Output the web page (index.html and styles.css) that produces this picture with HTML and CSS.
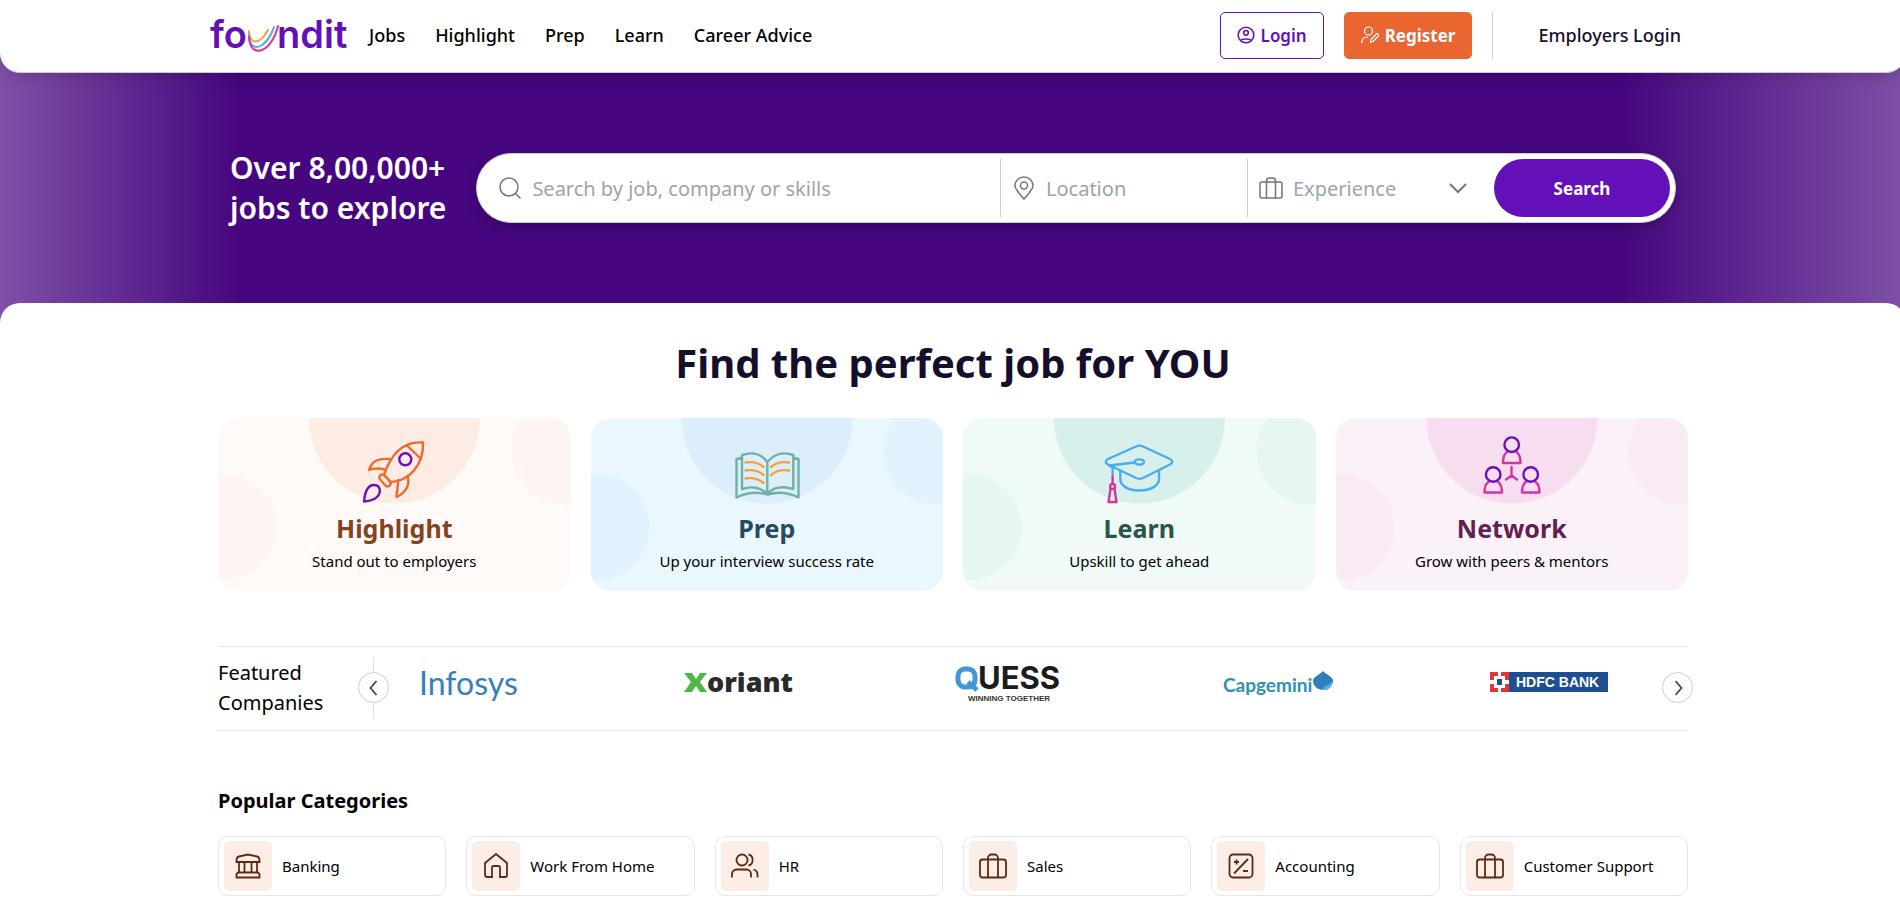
FILE: index.html
```html
<!DOCTYPE html>
<html lang="en">
<head>
  <meta charset="UTF-8" />
  <meta name="viewport" content="width=device-width, initial-scale=1.0"/>
  <title>foundit - Find the perfect job for you</title>
  <link rel="stylesheet" href="styles.css">
</head>
<body>
<div class="page">
  <header class="header">
    <div class="header-inner">
      <a href="#" class="logo" aria-label="foundit">
        <svg width="138" height="50" viewBox="0 0 138 50">
          <text class="logo-text" x="-1" y="38">fo</text>
          <text class="logo-text" x="66" y="38">ndit</text>
          <g fill="none" stroke-width="2" stroke-linecap="round">
            <path d="M38 21c0 14 11 14 19-1" stroke="#f5a53a"/>
            <path d="M38 24c0 20 17 16 25-7" stroke="#4db1f5"/>
            <path d="M38 27c1 22 22 17 29-11" stroke="#d9359a"/>
          </g>
        </svg>
      </a>
      <nav class="nav">
        <a href="#">Jobs</a>
        <a href="#">Highlight</a>
        <a href="#">Prep</a>
        <a href="#">Learn</a>
        <a href="#">Career Advice</a>
      </nav>
      <div class="header-actions">
        <button class="btn btn-login">
          <svg width="18" height="18" viewBox="0 0 18 18" fill="none" stroke="currentColor" stroke-width="1.6"><circle cx="9" cy="9" r="7.8"/><circle cx="9" cy="6.8" r="2.3"/><path d="M3.7 14.6c1-2.2 9.600-2.200 10.600 0"/></svg>
          Login
        </button>
        <button class="btn btn-register">
          <svg width="18" height="18" viewBox="0 0 18 18" fill="none" stroke="currentColor" stroke-width="1.2" stroke-linecap="round" stroke-linejoin="round"><circle cx="7.500" cy="5" r="4"/><path d="M.8 16.500c0-3.500 2-5.500 5.700-5.500M9.500 16.500l.5-3 5.500-5.500c1.500-1 3 .5 2 2L12 15.500z"/></svg>
          Register
        </button>
        <a href="#" class="employers">Employers Login</a>
      </div>
    </div>
  </header>

  <section class="hero">
    <div class="hero-inner">
      <p class="hero-text">Over 8,00,000+<br>jobs to explore</p>
      <form class="search">
        <label class="field field-job">
          <svg width="24" height="24" viewBox="0 0 24 24" class="field-icon"><circle cx="11" cy="11" r="9"/><path d="M17.500 17.500l5 5"/></svg>
          <input type="text" placeholder="Search by job, company or skills" aria-label="Search by job, company or skills">
        </label>
        <label class="field field-place">
          <svg width="24" height="24" viewBox="0 0 24 24" class="field-icon"><path d="M12 23C7 17 3 13.500 3 9.500a9 8.500 0 0 1 18 0c0 4-4 7.500-9 13.500z"/><circle cx="12" cy="9.500" r="3.500"/></svg>
          <input type="text" placeholder="Location" aria-label="Location">
        </label>
        <label class="field field-exp">
          <svg width="24" height="24" viewBox="0 0 24 24" class="field-icon"><rect x="1" y="6" width="22" height="16" rx="2"/><path d="M7.500 22V5a3 3 0 0 1 3-3h3a3 3 0 0 1 3 3v17"/></svg>
          <select aria-label="Experience"><option>Experience</option></select>
          <svg width="20" height="20" viewBox="0 0 20 20" class="field-icon field-chevron"><path d="M2 6l8 8 8-8"/></svg>
        </label>
        <button type="button" class="search-btn">Search</button>
      </form>
    </div>
  </section>

  <main class="main">
    <div class="container">
      <h1 class="title">Find the perfect job for YOU</h1>

      <div class="cards">
        <a href="#" class="card card-highlight">
          <svg width="70" height="86" viewBox="0 0 70 86" class="card-icon">
            <g stroke="#ee6a2c">
              <path d="M64 24.500C46 23 33 33 25 57l7 7c17-1 33-16 32-39.500z"/>
              <path d="M48 27.500l14 13.500M30.500 41C19 40 13 43 10 52c5-2 10-2 15.500-.5M48.500 58c3 9-2 17-11 21 0-6 2-10 1.500-17"/>
              <rect x="-3" y="-7" width="6" height="14" rx="3" transform="translate(26 62.500) rotate(-42)"/>
            </g>
            <g stroke="#6a10bc"><circle cx="46.300" cy="41.300" r="6"/><path d="M5 83.500C6 73 9 67 15 67c6 0 8 7 3 12-3 3-8 4-13 4.500z"/></g>
          </svg>
          <h2>Highlight</h2>
          <p>Stand out to employers</p>
        </a>
        <a href="#" class="card card-prep">
          <svg width="70" height="86" viewBox="0 0 70 86" class="card-icon">
            <path stroke="#6fb1a2" d="M35.300 76V44c-6-8-15-10.500-25.300-7v34c9-3 19-2 25.300 5 6-7 16-8 26-5V37c-10-3.500-19-1-26 7M10 40l-5.500 1v38.500c10-5 21-6 31-3 10-3 21-2 31 3V41L61.300 40"/>
            <path stroke="#f5a431" d="M13.500 44.500c7-1 13 0 18 4.500M13.500 52.500c7-1 13 0 18 4.500M13.500 60.500c7-1 13 0 18 4.500M39 49c5-4.500 11-5.500 18-4.500M39 57c5-4.500 11-5.500 18-4.500"/>
          </svg>
          <h2>Prep</h2>
          <p>Up your interview success rate</p>
        </a>
        <a href="#" class="card card-learn">
          <svg width="70" height="86" viewBox="0 0 70 86" class="card-icon">
            <g stroke="#4aabf7"><path d="M32 28.500L4 41c-3 1.500-3 4 0 5.500l28 13.500c2.500 1 4.500 1 7 0l27-13.500c3-1.500 3-4 0-5.500L39 28.500c-2.500-1.200-4.500-1.200-7 0z"/><path d="M16.300 52.500V61c0 7 8 11.500 19 11.500S55 68 55 61v-8.500M31 44.500L5 47.500l3.600 2V56"/><ellipse cx="35.400" cy="44" rx="4.600" ry="2.600"/></g>
            <g stroke="#d6359e"><path d="M8.600 58v8M6.500 71L4.500 84h8L10.500 71"/><circle cx="8.600" cy="68.500" r="2.500"/></g>
          </svg>
          <h2>Learn</h2>
          <p>Upskill to get ahead</p>
        </a>
        <a href="#" class="card card-network">
          <svg width="70" height="86" viewBox="0 0 70 86" class="card-icon">
            <path stroke="#d6359e" d="M30 34c-3 2-4 5-4 11h17.500c0-6-1-9-4-11M11.500 64c-3 2-4 5-4 10.500H25c0-5.500-1-8.500-4-10.500M49 64c-3 2-4 5-4 10.500h17.500c0-5.500-1-8.500-4-10.500M34.500 49v8.500L29 61.500M34.500 57.500l5.500 4"/>
            <g stroke="#6a10bc"><circle cx="34.700" cy="26.700" r="7.300"/><circle cx="16.200" cy="56.500" r="7.300"/><circle cx="53.700" cy="56.500" r="7.300"/></g>
          </svg>
          <h2>Network</h2>
          <p>Grow with peers &amp; mentors</p>
        </a>
      </div>

      <section class="featured">
        <h3 class="featured-title">Featured Companies</h3>
        <div class="prev">
          <button class="arrow" aria-label="Previous"><svg width="20" height="20" viewBox="0 0 20 20"><path d="M12.500 3L6.500 10l6 7"/></svg></button>
        </div>
        <div class="companies">
          <a href="#" class="company" aria-label="Infosys">
            <svg width="110" height="50" viewBox="0 0 110 50"><text class="infosys" x="5" y="37">Infosys</text></svg>
          </a>
          <a href="#" class="company" aria-label="Xoriant">
            <svg width="112" height="50" viewBox="0 0 112 50"><path d="M3 15h8l4 6 4-6h7l-7 9 7 10h-7l-4-6-4 6H3l7-10z" fill="#4db848"/><text class="xoriant" x="26" y="34">oriant</text></svg>
          </a>
          <a href="#" class="company" aria-label="Quess">
            <svg width="112" height="50" viewBox="0 0 112 50">
              <g fill="none" stroke-width="5"><rect x="9" y="11" width="17" height="18" rx="7" stroke="#3d97d8"/><path d="M19 24l9 8" stroke="#3d97d8"/></g>
              <text class="quess" x="29" y="31">UESS</text>
              <text class="quess-sub" x="19" y="43">WINNING TOGETHER</text>
            </svg>
          </a>
          <a href="#" class="company" aria-label="Capgemini">
            <svg width="116" height="50" viewBox="0 0 116 50"><text class="capgemini" x="5" y="34">Capgemini</text><path d="M105 13c3 4 10 5 10 10 0 5-5 9-10 9s-10-4-10-9 7-6 10-10z" fill="#2f80bd"/><path d="M114 23c-2 5-7 3-10 9 6 1 11-3 10-9z" fill="#4bb8e6"/></svg>
          </a>
          <a href="#" class="company" aria-label="HDFC Bank">
            <svg width="118" height="50" viewBox="0 0 118 50">
              <path fill="#1d4f91" d="M0 14h118v20H0z"/><path fill="#e0363b" d="M0 14h19v20H0z"/>
              <path fill="#fff" d="M4 18h11v12H4zM8 14h3v20H8zM0 22h19v4H0z"/><path fill="#1d4f91" d="M7 21h5v6H7z"/>
              <text class="hdfc" x="26" y="29">HDFC BANK</text>
            </svg>
          </a>
        </div>
        <button class="arrow arrow-next" aria-label="Next"><svg width="20" height="20" viewBox="0 0 20 20"><path d="M7.500 3l6 7-6 7"/></svg></button>
      </section>

      <section>
        <h3 class="cat-title">Popular Categories</h3>
        <div class="cats">
          <a href="#" class="cat">
            <span class="cat-icon"><svg width="26" height="26" viewBox="0 0 26 26"><path d="M1.500 7.500Q1.500 4 4 3.500L13 1.500l9 2q2.500.5 2.500 4V9h-23zM4 9.500v10M9.500 9.500v10M16.500 9.500v10M22 9.500v10M3 19.500h20l1.500 1.500v3.500h-23V21z"/></svg></span>
            Banking
          </a>
          <a href="#" class="cat">
            <span class="cat-icon"><svg width="26" height="26" viewBox="0 0 26 26"><path d="M2 10L13 1l11 9v12a2 2 0 0 1-2 2h-5v-9.500a1.500 1.500 0 0 0-1.500-1.500h-5A1.500 1.500 0 0 0 9 14.500V24H4a2 2 0 0 1-2-2z"/></svg></span>
            Work From Home
          </a>
          <a href="#" class="cat">
            <span class="cat-icon"><svg width="28" height="26" viewBox="0 0 28 26"><circle cx="11" cy="7" r="5.500"/><path d="M1 24.500V21a4.500 4.500 0 0 1 4.500-4.500h10A4.500 4.500 0 0 1 20 21v3.500M17.500 1.500c5.500 1 5.500 10 0 11M22.500 16.500c3 .8 4 2.500 4 5v3"/></svg></span>
            HR
          </a>
          <a href="#" class="cat">
            <span class="cat-icon"><svg width="28" height="26" viewBox="0 0 28 26"><rect x="1" y="6.500" width="26" height="18" rx="2.500"/><path d="M9 24.500V5a3.500 3.500 0 0 1 3.500-3.500h3A3.500 3.500 0 0 1 19 5v19.500"/></svg></span>
            Sales
          </a>
          <a href="#" class="cat">
            <span class="cat-icon"><svg width="26" height="26" viewBox="0 0 26 26"><rect x="1.500" y="1.500" width="23" height="23" rx="3.500"/><path d="M6 20.500L20 6M6 9h5M8.500 6.500v5M15 18h5"/></svg></span>
            Accounting
          </a>
          <a href="#" class="cat">
            <span class="cat-icon"><svg width="28" height="26" viewBox="0 0 28 26"><rect x="1" y="6.500" width="26" height="18" rx="2.500"/><path d="M9 24.500V5a3.500 3.500 0 0 1 3.500-3.500h3A3.500 3.500 0 0 1 19 5v19.500"/></svg></span>
            Customer Support
          </a>
        </div>
      </section>
    </div>
  </main>
</div>
</body>
</html>
```
FILE: styles.css
```css
* {
  box-sizing: border-box;
}

body, h1, h2, h3, p {
  margin: 0;
}

body {
  font-family: "Noto Sans", sans-serif;
  color: #000;
  background: #fff;
  overflow: hidden;
}

a {
  color: inherit;
  text-decoration: none;
}

button, input, select {
  font-family: inherit;
}

button {
  cursor: pointer;
}

.page {
  margin-right: -6px;
  background: linear-gradient(90deg, #7e51a6 0, #46067f 240px, #46067f calc(100% - 286px), #7e51a6 100%);
}

/* header */
.header {
  position: relative;
  z-index: 2;
  background: #fff;
  border-bottom: 1px solid #ccc;
  border-radius: 0 0 20px 20px;
  box-shadow: 0 4px 14px rgba(0, 0, 0, 0.15);
}

.header-inner {
  display: flex;
  align-items: center;
  max-width: 1484px;
  height: 72px;
  margin: 0 auto;
  padding: 0 14px 2px 0;
}

.logo {
  display: flex;
}

.logo svg {
  overflow: visible;
}

.logo-text {
  font: 600 38px Inter, sans-serif;
  fill: #6410b8;
}

.nav {
  display: flex;
  gap: 30px;
  margin-left: 20px;
  font-size: 18px;
  font-weight: 500;
}

.header-actions {
  display: flex;
  align-items: center;
  gap: 20px;
  margin-left: auto;
}

.btn {
  display: flex;
  align-items: center;
  gap: 6px;
  height: 47px;
  padding: 0 16px;
  border: 1px solid #6410b8;
  border-radius: 5px;
  background: #fff;
  color: #6410b8;
  font-size: 17px;
  font-weight: 600;
}

.btn-register {
  border-color: #e96630;
  background: #e96630;
  color: #fff;
  font-weight: 700;
}

.employers {
  padding: 0 0 0 45px;
  border-left: 1px solid #ccccd6;
  line-height: 47px;
  color: #150f2b;
  font-size: 18px;
  font-weight: 500;
}

/* hero */
.hero-inner {
  display: flex;
  align-items: center;
  gap: 30px;
  max-width: 1446px;
  height: 230px;
  margin: 0 auto;
}

.hero-text {
  color: #fff;
  font-size: 30px;
  line-height: 40px;
  font-weight: 600;
  white-space: nowrap;
}

.search {
  display: flex;
  flex: 1;
  height: 70px;
  padding: 5px;
  border: 1px solid #ccc;
  border-radius: 35px;
  background: #fff;
  box-shadow: 0 4px 12px rgba(0, 0, 0, 0.25);
}

.field {
  display: flex;
  align-items: center;
  gap: 10px;
  padding: 0 11px;
}

.field-job {
  flex: 1;
  padding-left: 16px;
}

.field-place,
.field-exp {
  width: 247px;
  border-left: 1px solid #ccc;
}

.field-exp {
  padding-right: 26px;
}

.field-icon {
  flex: none;
  fill: none;
  stroke: #77727f;
  stroke-width: 1.500;
}

.field-chevron {
  stroke-width: 2;
}

.field input,
.field select {
  flex: 1;
  min-width: 0;
  padding: 0;
  border: 0;
  outline: 0;
  appearance: none;
  background: none;
  color: #9ca3af;
  font-size: 20px;
}

.field input::placeholder {
  color: #9ca3af;
}

.search-btn {
  width: 176px;
  border: 0;
  border-radius: 30px;
  background: #6410b8;
  color: #fff;
  font-size: 17px;
  font-weight: 700;
}

/* main */
.main {
  border-radius: 20px 20px 0 0;
  background: #fff;
}

.container {
  max-width: 1470px;
  margin: 0 auto;
  padding: 30px 0 40px;
}

.title {
  margin-bottom: 25px;
  color: #150f2b;
  font-size: 40px;
  line-height: 60px;
  font-weight: 700;
  text-align: center;
}

.cards {
  display: grid;
  grid-template-columns: repeat(4, 1fr);
  gap: 20px;
}

.card {
  --bg: #fffaf7;
  --dot: #fff5f3;
  --big: #fdece4;
  display: flex;
  flex-direction: column;
  align-items: center;
  height: 173px;
  border-radius: 20px;
  background:
    radial-gradient(circle at 50% 0, var(--big) 85px, transparent 86px),
    radial-gradient(circle at calc(100% - 6px) 33px, var(--dot) 53px, transparent 54px),
    radial-gradient(circle at 5px 109px, var(--dot) 53px, transparent 54px),
    var(--bg);
}

.card-icon {
  fill: none;
  stroke-width: 2.400;
  stroke-linecap: round;
  stroke-linejoin: round;
}

.card h2 {
  margin-top: 5px;
  font-size: 25px;
  line-height: 38px;
  font-weight: 700;
}

.card p {
  margin-top: 4px;
  font-size: 15px;
  line-height: 20px;
}

.card-highlight h2 {
  color: #84431f;
}

.card-prep {
  --bg: #eaf7ff;
  --dot: #e1f3fe;
  --big: #dceefc;
}

.card-prep h2 {
  color: #264a63;
}

.card-learn {
  --bg: #f0faf8;
  --dot: #e6f7f3;
  --big: #d7f0eb;
}

.card-learn h2 {
  color: #2a554b;
}

.card-network {
  --bg: #fbf1f9;
  --dot: #f8ebf6;
  --big: #f6ddf0;
}

.card-network h2 {
  color: #602150;
}

/* featured companies */
.featured {
  display: flex;
  align-items: center;
  margin-top: 55px;
  height: 85px;
  padding-bottom: 2px;
  border-top: 1px solid #e2e3ee;
  border-bottom: 1px solid #e2e3ee;
}

.featured-title {
  width: 140px;
  padding-right: 30px;
  font-size: 20px;
  line-height: 30px;
  font-weight: 400;
}

.prev {
  display: flex;
  align-items: center;
  height: 60px;
  background: linear-gradient(#ddd, #ddd) center / 1px 100% no-repeat;
}

.arrow {
  display: flex;
  align-items: center;
  justify-content: center;
  width: 31px;
  height: 31px;
  padding: 0;
  border: 1px solid #ccc;
  border-radius: 50%;
  background: #fff;
}

.arrow svg {
  fill: none;
  stroke: #4a4458;
  stroke-width: 1.800;
}

.arrow-next {
  margin-right: -5px;
}

.companies {
  display: flex;
  flex: 1;
  justify-content: space-between;
  padding: 0 54px 10px 25px;
}

.company svg {
  display: block;
  overflow: visible;
}

.infosys {
  font: 32px Lato, sans-serif;
  fill: #3a80b8;
}

.xoriant {
  font: 800 27px "Open Sans", sans-serif;
  fill: #2a2a2c;
}

.quess {
  font: 700 31px Inter, sans-serif;
  fill: #1c1c1e;
}

.quess-sub {
  font: 700 8px "Liberation Sans", sans-serif;
  fill: #333;
}

.capgemini {
  font: 700 19px Lato, sans-serif;
  fill: #2f8fb8;
}

.hdfc {
  font: 700 14px "Liberation Sans", sans-serif;
  fill: #fff;
}

/* popular categories */
.cat-title {
  margin: 55px 0 20px;
  font-size: 20px;
  line-height: 30px;
  font-weight: 700;
}

.cats {
  display: grid;
  grid-template-columns: repeat(6, 1fr);
  gap: 20px;
}

.cat {
  display: flex;
  align-items: center;
  gap: 10px;
  height: 60px;
  padding: 5px;
  border: 1px solid #e6e6e6;
  border-radius: 10px;
  font-size: 15px;
}

.cat-icon {
  display: flex;
  align-items: center;
  justify-content: center;
  width: 48px;
  height: 50px;
  border-radius: 5px;
  background: #fceee7;
}

.cat-icon svg {
  fill: none;
  stroke: #5e2a14;
  stroke-width: 1.800;
}
```
